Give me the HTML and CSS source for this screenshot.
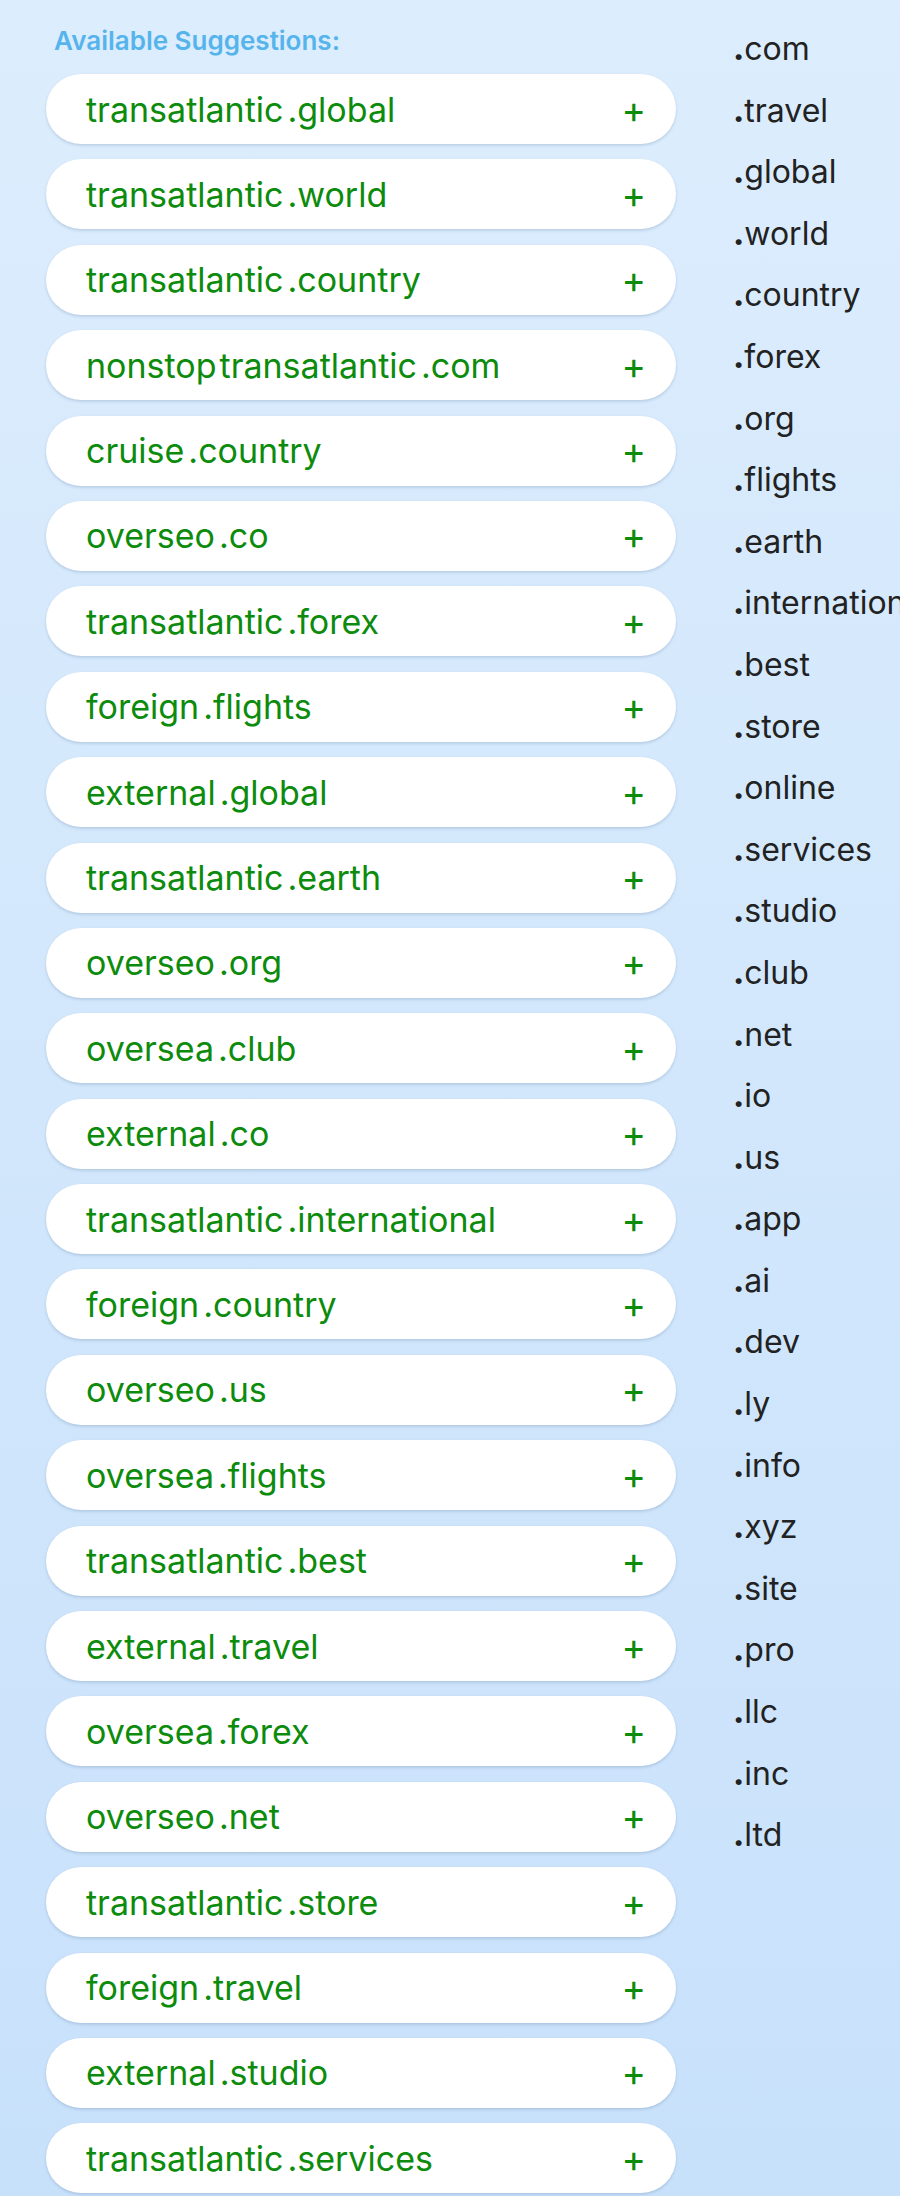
FILE: index.html
```html
<!DOCTYPE html>
<html lang="en">
<head>
<meta charset="utf-8">
<title>Available Suggestions</title>
<link rel="stylesheet" href="styles.css">
</head>
<body>
<main class="page">
  <section class="suggestions">
    <h2 class="suggestions-title">Available Suggestions:</h2>
    <ul class="pill-list">
      <li class="pill"><span class="name"><span>transatlantic</span><span class="tld">.global</span></span><span class="add">+</span></li>
      <li class="pill"><span class="name"><span>transatlantic</span><span class="tld">.world</span></span><span class="add">+</span></li>
      <li class="pill"><span class="name"><span>transatlantic</span><span class="tld">.country</span></span><span class="add">+</span></li>
      <li class="pill"><span class="name"><span>nonstop</span><span class="word">transatlantic</span><span class="tld">.com</span></span><span class="add">+</span></li>
      <li class="pill"><span class="name"><span>cruise</span><span class="tld">.country</span></span><span class="add">+</span></li>
      <li class="pill"><span class="name"><span>overseo</span><span class="tld">.co</span></span><span class="add">+</span></li>
      <li class="pill"><span class="name"><span>transatlantic</span><span class="tld">.forex</span></span><span class="add">+</span></li>
      <li class="pill"><span class="name"><span>foreign</span><span class="tld">.flights</span></span><span class="add">+</span></li>
      <li class="pill"><span class="name"><span>external</span><span class="tld">.global</span></span><span class="add">+</span></li>
      <li class="pill"><span class="name"><span>transatlantic</span><span class="tld">.earth</span></span><span class="add">+</span></li>
      <li class="pill"><span class="name"><span>overseo</span><span class="tld">.org</span></span><span class="add">+</span></li>
      <li class="pill"><span class="name"><span>oversea</span><span class="tld">.club</span></span><span class="add">+</span></li>
      <li class="pill"><span class="name"><span>external</span><span class="tld">.co</span></span><span class="add">+</span></li>
      <li class="pill"><span class="name"><span>transatlantic</span><span class="tld">.international</span></span><span class="add">+</span></li>
      <li class="pill"><span class="name"><span>foreign</span><span class="tld">.country</span></span><span class="add">+</span></li>
      <li class="pill"><span class="name"><span>overseo</span><span class="tld">.us</span></span><span class="add">+</span></li>
      <li class="pill"><span class="name"><span>oversea</span><span class="tld">.flights</span></span><span class="add">+</span></li>
      <li class="pill"><span class="name"><span>transatlantic</span><span class="tld">.best</span></span><span class="add">+</span></li>
      <li class="pill"><span class="name"><span>external</span><span class="tld">.travel</span></span><span class="add">+</span></li>
      <li class="pill"><span class="name"><span>oversea</span><span class="tld">.forex</span></span><span class="add">+</span></li>
      <li class="pill"><span class="name"><span>overseo</span><span class="tld">.net</span></span><span class="add">+</span></li>
      <li class="pill"><span class="name"><span>transatlantic</span><span class="tld">.store</span></span><span class="add">+</span></li>
      <li class="pill"><span class="name"><span>foreign</span><span class="tld">.travel</span></span><span class="add">+</span></li>
      <li class="pill"><span class="name"><span>external</span><span class="tld">.studio</span></span><span class="add">+</span></li>
      <li class="pill"><span class="name"><span>transatlantic</span><span class="tld">.services</span></span><span class="add">+</span></li>
    </ul>
  </section>
  <aside class="tlds">
    <ul class="tld-list">
      <li><b>.</b>com</li>
      <li><b>.</b>travel</li>
      <li><b>.</b>global</li>
      <li><b>.</b>world</li>
      <li><b>.</b>country</li>
      <li><b>.</b>forex</li>
      <li><b>.</b>org</li>
      <li><b>.</b>flights</li>
      <li><b>.</b>earth</li>
      <li><b>.</b>international</li>
      <li><b>.</b>best</li>
      <li><b>.</b>store</li>
      <li><b>.</b>online</li>
      <li><b>.</b>services</li>
      <li><b>.</b>studio</li>
      <li><b>.</b>club</li>
      <li><b>.</b>net</li>
      <li><b>.</b>io</li>
      <li><b>.</b>us</li>
      <li><b>.</b>app</li>
      <li><b>.</b>ai</li>
      <li><b>.</b>dev</li>
      <li><b>.</b>ly</li>
      <li><b>.</b>info</li>
      <li><b>.</b>xyz</li>
      <li><b>.</b>site</li>
      <li><b>.</b>pro</li>
      <li><b>.</b>llc</li>
      <li><b>.</b>inc</li>
      <li><b>.</b>ltd</li>
    </ul>
  </aside>
</main>
</body>
</html>
```

FILE: styles.css
```css
html, body {
  margin: 0;
  padding: 0;
  overflow: hidden;
}
body {
  width: 900px;
  height: 2196px;
  background: linear-gradient(180deg, #dcedfd 0%, #c8e1fb 100%);
  font-family: Inter, "Noto Sans", "Liberation Sans", sans-serif;
}
.page {
  display: flex;
  align-items: flex-start;
  padding-left: 46px;
  gap: 57px;
}
.suggestions {
  width: 630px;
  flex: none;
}
.suggestions-title {
  margin: 0;
  padding: 26px 0 0 8px;
  height: 74px;
  box-sizing: border-box;
  font-size: 26px;
  line-height: 30px;
  font-weight: 600;
  color: #56b4ec;
}
.pill-list {
  list-style: none;
  margin: 0;
  padding: 0;
  display: flex;
  flex-direction: column;
  gap: 15.4px;
}
.pill {
  height: 70px;
  box-sizing: border-box;
  background: #ffffff;
  border-radius: 35px;
  box-shadow: 0 1.5px 3px rgba(60, 90, 130, 0.22);
  display: flex;
  align-items: center;
  justify-content: space-between;
  padding: 0 30px 0 40px;
  color: #0c8b0c;
  font-size: 34px;
}
.name {
  display: flex;
  white-space: nowrap;
  font-weight: 400;
}
.word {
  margin-left: 3px;
}
.tld {
  margin-left: 4px;
}
.add {
  font-size: 37px;
  line-height: 1;
  font-weight: 400;
}
.tlds {
  flex: none;
  white-space: nowrap;
}
.tld-list {
  list-style: none;
  margin: 0;
  padding: 18px 0 0;
  font-size: 32px;
  line-height: 61.6px;
  color: #222222;
}
.tld-list b {
  font-weight: 800;
}
```
